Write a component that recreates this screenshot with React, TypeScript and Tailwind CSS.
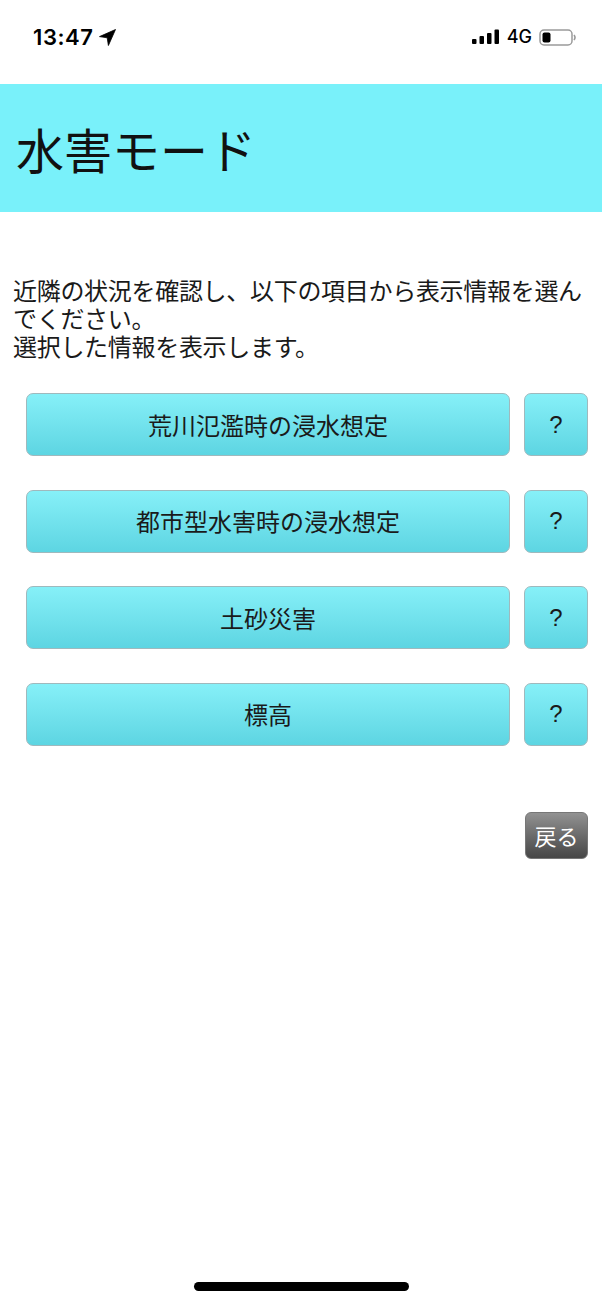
import React from "react";

const jp = { fontFamily: '"Noto Sans CJK JP", "Noto Sans", sans-serif' };

function MainButton({ label }: { label: string }) {
  return (
    <div className="flex gap-[14px] h-[63px]">
      <button
        className="flex-1 h-full rounded-[7px] border border-[#9fb9bd] bg-gradient-to-b from-[#86f0f8] to-[#5dd5e2] text-[24px] text-[#1a1a1a] flex items-center justify-center"
        style={jp}
      >
        {label}
      </button>
      <button
        className="w-[64px] h-full rounded-[7px] border border-[#9fb9bd] bg-gradient-to-b from-[#86f0f8] to-[#5dd5e2] text-[24px] text-[#1a1a1a] flex items-center justify-center"
        style={{ fontFamily: '"Liberation Sans", Arial, sans-serif' }}
      >
        ?
      </button>
    </div>
  );
}

export default function App() {
  return (
    <div className="w-[602px] h-[1304px] bg-white relative overflow-hidden" style={jp}>
      {/* status bar */}
      <div className="h-[84px] flex items-start justify-between px-[33px] pt-[25px]">
        <div className="flex items-center gap-[5px]">
          <span
            className="text-[22px] font-semibold text-black leading-[24px] tracking-[0.6px]"
            style={{ fontFamily: 'Inter, "Liberation Sans", sans-serif' }}
          >
            13:47
          </span>
          <svg width="17" height="17" viewBox="0 0 17 17">
            <path d="M16.5 0.5 L0.5 7.6 L8.2 8.8 L9.4 16.5 Z" fill="#000" stroke="#000" strokeWidth="0.8" strokeLinejoin="round" />
          </svg>
        </div>
        <div className="flex items-center gap-[7px] pt-[3px] mr-[-8px]">
          <svg width="28" height="16" viewBox="0 0 28 16">
            <rect x="0" y="10" width="4.5" height="5" rx="1" fill="#000" />
            <rect x="7.5" y="7" width="4.5" height="8" rx="1" fill="#000" />
            <rect x="15" y="4" width="4.5" height="11" rx="1" fill="#000" />
            <rect x="22.5" y="0.5" width="4.5" height="14.5" rx="1" fill="#000" />
          </svg>
          <span
            className="text-[18px] font-medium text-black leading-[18px]"
            style={{ fontFamily: 'Inter, "Liberation Sans", sans-serif' }}
          >
            4G
          </span>
          <svg width="38" height="17" viewBox="0 0 38 17">
            <rect x="1" y="1" width="32" height="15" rx="4" fill="none" stroke="#9a9a9a" strokeWidth="1.5" />
            <rect x="3.5" y="3.5" width="8" height="10" rx="2" fill="#000" />
            <path d="M35 6 Q37 8.5 35 11" fill="none" stroke="#9a9a9a" strokeWidth="1.6" />
          </svg>
        </div>
      </div>

      {/* header */}
      <div className="h-[128px] bg-[#79f1fa] flex items-center pl-[16px]">
        <h1 className="text-[48px] font-normal text-[#111] leading-none" style={jp}>
          水害モード
        </h1>
      </div>

      {/* description */}
      <p className="mt-[64px] px-[13px] text-[24px] leading-[28px] text-[#1a1a1a] tracking-[-0.3px]" style={jp}>
        近隣の状況を確認し、以下の項目から表示情報を選んでください。
        <br />
        選択した情報を表示します。
      </p>

      {/* buttons */}
      <div className="mt-[33px] pl-[26px] pr-[14px] flex flex-col gap-[33.5px]">
        <MainButton label="荒川氾濫時の浸水想定" />
        <MainButton label="都市型水害時の浸水想定" />
        <MainButton label="土砂災害" />
        <MainButton label="標高" />
      </div>

      {/* back */}
      <div className="mt-[66px] pr-[14px] flex justify-end">
        <button
          className="w-[63px] h-[47px] rounded-[6px] border border-[#777] bg-gradient-to-b from-[#929292] to-[#474747] text-white text-[22px] flex items-center justify-center"
          style={jp}
        >
          戻る
        </button>
      </div>

      {/* home indicator */}
      <div className="absolute left-[194px] top-[1282px] w-[215px] h-[9px] rounded-full bg-black" />
    </div>
  );
}
